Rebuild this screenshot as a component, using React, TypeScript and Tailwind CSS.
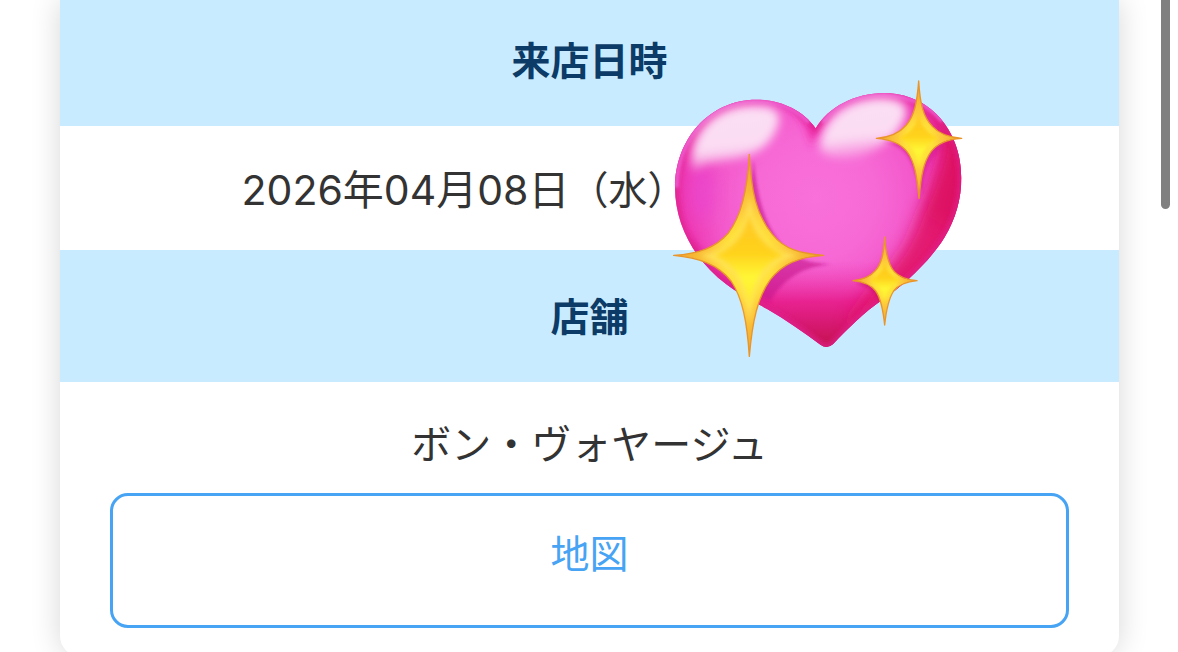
function SparklingHeart() {
  return (
    <svg
      viewBox="0 0 960 900"
      role="img"
      aria-label="キラキラハート"
      className="absolute -top-[89px] -left-[27px] h-[300px] w-[320px] max-w-none"
    >
      <defs>
        <radialGradient id="body" gradientUnits="userSpaceOnUse" cx="470" cy="380" r="500">
          <stop offset="0" stopColor="#f970da" />
          <stop offset="0.35" stopColor="#f76ad6" />
          <stop offset="0.6" stopColor="#f358ca" />
          <stop offset="0.78" stopColor="#ee3ab4" />
          <stop offset="1" stopColor="#dc1570" />
        </radialGradient>
        <linearGradient id="tip" x1="0" y1="0" x2="0" y2="1">
          <stop offset="0.66" stopColor="#ee3ab4" stopOpacity="0" />
          <stop offset="0.82" stopColor="#e61a88" stopOpacity="0.85" />
          <stop offset="1" stopColor="#c3124e" />
        </linearGradient>
        <linearGradient id="gloss" x1="0.4" y1="0" x2="0.55" y2="1">
          <stop offset="0" stopColor="#fbdff4" />
          <stop offset="0.65" stopColor="#fbdcf3" />
          <stop offset="1" stopColor="#f9a9e4" stopOpacity="0.4" />
        </linearGradient>
        <radialGradient id="gold" cx="0.5" cy="0.52" r="0.5">
          <stop offset="0" stopColor="#ffe02a" />
          <stop offset="0.3" stopColor="#ffe23a" />
          <stop offset="0.5" stopColor="#fdc93c" />
          <stop offset="1" stopColor="#eda12b" />
        </radialGradient>
        <linearGradient id="core" x1="0" y1="0" x2="0" y2="1">
          <stop offset="0" stopColor="#ffc826" />
          <stop offset="0.42" stopColor="#ffd11c" />
          <stop offset="0.68" stopColor="#fff735" />
          <stop offset="1" stopColor="#ffe62c" />
        </linearGradient>
        <filter id="blur4" x="-20%" y="-20%" width="140%" height="140%">
          <feGaussianBlur stdDeviation="4" />
        </filter>
        <filter id="blur8" x="-30%" y="-30%" width="160%" height="160%">
          <feGaussianBlur stdDeviation="8" />
        </filter>
        <filter id="blur14" x="-30%" y="-30%" width="160%" height="160%">
          <feGaussianBlur stdDeviation="14" />
        </filter>
        <filter id="blur24" x="-50%" y="-50%" width="200%" height="200%">
          <feGaussianBlur stdDeviation="24" />
        </filter>
        <path
          id="heart"
          d="M470 172 C430 116 362 86 292 86 C150 86 48 206 48 350 C48 458 104 566 202 640 C236 666 282 690 324 714 C382 748 434 784 484 821 Q503 836 522 820 C570 770 616 724 668 688 C742 636 812 570 856 500 C890 444 907 384 907 320 C907 174 808 66 676 66 C588 66 508 108 470 172Z"
        />
        <clipPath id="heartClip">
          <use href="#heart" />
        </clipPath>
      </defs>

      <use href="#heart" fill="url(#body)" />
      <g clipPath="url(#heartClip)">
        <use href="#heart" fill="url(#tip)" />
        <path
          d="M850 140 C870 230 830 330 785 420 C755 500 730 560 660 620 L560 760 L700 800 L960 500 L960 200Z"
          fill="#e11268"
          opacity="0.9"
          filter="url(#blur24)"
        />
        <path
          d="M800 80 C860 150 870 240 836 300 C820 350 810 400 800 430 L880 480 L960 400 L950 100Z"
          fill="#d80f58"
          opacity="0.45"
          filter="url(#blur24)"
        />
        <ellipse cx="130" cy="360" rx="40" ry="90" fill="#ea44cf" opacity="0.7" filter="url(#blur24)" />
        <path
          d="M90 500 C140 580 220 640 320 700 L280 740 L60 600Z"
          fill="#d3127a"
          opacity="0.7"
          filter="url(#blur14)"
        />
        <path d="M400 112 C440 150 452 180 456 225 C476 190 500 160 520 130 L470 90Z" fill="#ee27a4" filter="url(#blur14)" />
        <use href="#heart" fill="none" stroke="#e0208f" strokeWidth="20" opacity="0.75" filter="url(#blur8)" />
        <path
          d="M52 350 C56 190 160 92 292 92 C350 92 410 112 450 154 M490 154 C540 90 610 72 676 72 C750 76 810 100 850 150"
          fill="none"
          stroke="#ee55cb"
          strokeWidth="14"
          filter="url(#blur4)"
        />
        <path
          d="M100 300 C84 190 164 104 280 104 C346 102 374 124 354 170 C330 230 280 256 220 266 C166 276 130 276 100 300Z"
          fill="url(#gloss)"
          filter="url(#blur14)"
        />
        <path
          d="M484 234 C484 146 566 84 666 82 C730 82 758 108 734 150 C708 204 670 226 622 248 C566 270 500 266 484 234Z"
          fill="url(#gloss)"
          filter="url(#blur14)"
        />
        <path
          d="M284 266 C296 390 324 490 398 548 C430 570 470 577 518 580 C430 588 378 620 334 690 L220 640 L270 400Z"
          fill="#c4128b"
          opacity="0.6"
          filter="url(#blur4)"
        />
        <path d="M590 638 C640 650 655 670 664 700 L700 680 L680 620Z" fill="#c90f6b" opacity="0.5" filter="url(#blur4)" />
        <path d="M660 212 C730 220 750 250 770 310 L792 370 C792 300 820 250 860 224Z" fill="#d4148b" opacity="0.5" filter="url(#blur4)" />
      </g>

      <g>
        <path
          d="M271 250 C276 360 292 432 340 490 C378 538 430 548 494 553 C416 558 370 580 334 626 C296 678 280 750 271 856 C264 750 250 680 216 630 C176 578 116 560 44 553 C120 548 170 530 208 486 C250 432 266 350 271 250Z"
          fill="url(#gold)"
          stroke="#e9952a"
          strokeWidth="4"
          strokeLinejoin="round"
        />
        <path
          d="M271 370 C282 450 304 496 336 524 C356 540 384 548 420 554 C360 564 328 592 306 628 C288 662 278 700 271 760 C264 700 250 652 226 616 C202 586 168 566 122 554 C170 546 202 530 228 500 C252 472 264 430 271 370Z"
          fill="#ffe258"
          filter="url(#blur8)"
        />
        <path
          d="M271 424 C282 484 314 526 376 552 C322 572 288 616 271 712 C256 622 222 576 166 554 C222 532 258 492 271 424Z"
          fill="url(#core)"
          filter="url(#blur8)"
        />
      </g>
      <g>
        <path
          d="M779 30 C783 96 792 138 820 166 C842 190 872 199 908 202 C864 205 836 216 816 242 C794 272 786 314 780 382 C774 314 766 270 744 242 C724 216 692 205 652 202 C692 199 720 188 742 162 C766 134 774 96 779 30Z"
          fill="url(#gold)"
          stroke="#e9952a"
          strokeWidth="4"
          strokeLinejoin="round"
        />
        <path
          d="M779 124 C786 168 808 190 840 202 C806 212 788 244 780 292 C772 244 752 212 716 202 C752 190 772 168 779 124Z"
          fill="url(#core)"
          filter="url(#blur4)"
        />
      </g>
      <g>
        <path
          d="M677 498 C680 548 688 582 706 602 C722 620 744 626 774 629 C742 632 720 640 704 660 C688 684 682 714 677 762 C672 714 666 682 650 660 C634 640 612 632 582 629 C612 626 632 618 648 600 C668 580 674 548 677 498Z"
          fill="url(#gold)"
          stroke="#e9952a"
          strokeWidth="4"
          strokeLinejoin="round"
        />
        <path
          d="M677 568 C682 602 698 620 728 629 C698 638 682 660 677 694 C672 660 656 638 628 629 C656 620 672 602 677 568Z"
          fill="url(#core)"
          filter="url(#blur4)"
        />
      </g>
    </svg>
  );
}

export default function App() {
  return (
    <div className="relative h-screen overflow-hidden bg-white font-['Inter','Noto_Sans_CJK_JP',sans-serif] text-[39px] leading-[60px] text-[#333333]">
      <main className="mr-[59px] ml-[60px] rounded-b-[20px] bg-white text-center shadow-[0_0_30px_rgba(0,0,0,0.16)]">
        <dl>
          <dt className="bg-[#c9ebff] pt-[31px] pb-[35px] font-bold text-[#0b3b66]">来店日時</dt>
          <dd className="flex justify-center pt-[34px] pb-[30px]">
            <time dateTime="2026-04-08" className="text-[41px] whitespace-nowrap">
              2026年04月08日
            </time>
            <span className="whitespace-nowrap">（水）</span>
            <span className="relative w-[251px] shrink-0">
              <SparklingHeart />
            </span>
          </dd>
          <dt className="bg-[#c9ebff] pt-[37px] pb-[35px] font-bold text-[#0b3b66]">店舗</dt>
          <dd className="px-[50px] pt-[33px] pb-7">
            <p className="text-[40px]">ボン・ヴォヤージュ</p>
            <a
              href="#map"
              className="mt-[18px] block rounded-[18px] border-[3px] border-[#47a3f3] pt-7 pb-[41px] text-[#47a3f3]"
            >
              地図
            </a>
          </dd>
        </dl>
      </main>
      <div aria-hidden="true" className="absolute top-0 right-2 h-[209px] w-[9px] rounded-b-full bg-[#808080]" />
    </div>
  );
}
